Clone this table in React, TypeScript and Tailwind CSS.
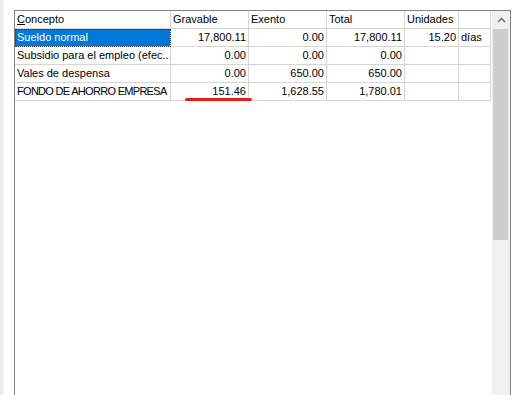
import React from "react";

type Row = {
  concepto: string;
  gravable: string;
  exento: string;
  total: string;
  unidades: string;
  unidad: string;
};

const rows: Row[] = [
  { concepto: "Sueldo normal", gravable: "17,800.11", exento: "0.00", total: "17,800.11", unidades: "15.20", unidad: "días" },
  { concepto: "Subsidio para el empleo (efec...", gravable: "0.00", exento: "0.00", total: "0.00", unidades: "", unidad: "" },
  { concepto: "Vales de despensa", gravable: "0.00", exento: "650.00", total: "650.00", unidades: "", unidad: "" },
  { concepto: "FONDO DE AHORRO EMPRESA", gravable: "151.46", exento: "1,628.55", total: "1,780.01", unidades: "", unidad: "" },
];

const cols = "grid grid-cols-[156px_78px_78px_78px_54px_32px]";
const cell = "h-[18px] border-r border-b border-[#d6d6d6] px-[2px] leading-[17px] whitespace-nowrap overflow-hidden";

function ScrollBar() {
  return (
    <div className="w-[18px] bg-[#f0f0f0] flex flex-col">
      <div className="h-[18px] flex items-center justify-center">
        <svg width="9" height="6" viewBox="0 0 9 6">
          <path d="M1 5 L4.5 1.5 L8 5" fill="none" stroke="#606060" strokeWidth="1.3" />
        </svg>
      </div>
      <div className="mx-[1px] mr-[2px] h-[211px] bg-[#cdcdcd]" />
    </div>
  );
}

export default function App() {
  return (
    <div
      className="w-[531px] h-[395px] bg-white flex overflow-hidden text-[11px] text-black"
      style={{ fontFamily: "Tahoma, 'Liberation Sans', sans-serif" }}
    >
      <div className="w-[4px] bg-gradient-to-r from-[#e6e6e6] to-[#f7f7f7]" />
      <div className="pl-[10px] pt-[10px] pr-[20px] flex-1 relative">
        <div className="h-[400px] border border-[#828282] border-b-0 flex">
          <div className="w-[477px]">
            <div className={cols}>
              <div className={cell}>
                <span className="underline">C</span>oncepto
              </div>
              <div className={cell}>Gravable</div>
              <div className={cell}>Exento</div>
              <div className={cell}>Total</div>
              <div className={cell}>Unidades</div>
              <div className={cell} />
            </div>
            {rows.map((r, i) => {
              const upper = r.concepto === r.concepto.toUpperCase();
              return (
                <div key={r.concepto} className={cols}>
                  <div
                    className={`${cell} ${upper ? "tracking-[-0.7px]" : ""} ${
                      i === 0 ? "bg-[#0078d7] text-white outline outline-1 outline-dotted outline-offset-[-1px] outline-[#333]" : ""
                    }`}
                  >
                    {r.concepto}
                  </div>
                  <div className={`${cell} text-right`}>{r.gravable}</div>
                  <div className={`${cell} text-right`}>{r.exento}</div>
                  <div className={`${cell} text-right`}>{r.total}</div>
                  <div className={`${cell} text-right`}>{r.unidades}</div>
                  <div className={cell}>{r.unidad}</div>
                </div>
              );
            })}
          </div>
          <div className="flex-1" />
          <ScrollBar />
        </div>
        {/* red marker under the Gravable value */}
        <div className="absolute left-[181px] top-[98px] w-[67px] h-[3px] rounded-full bg-[#e21b1b]" />
      </div>
    </div>
  );
}
